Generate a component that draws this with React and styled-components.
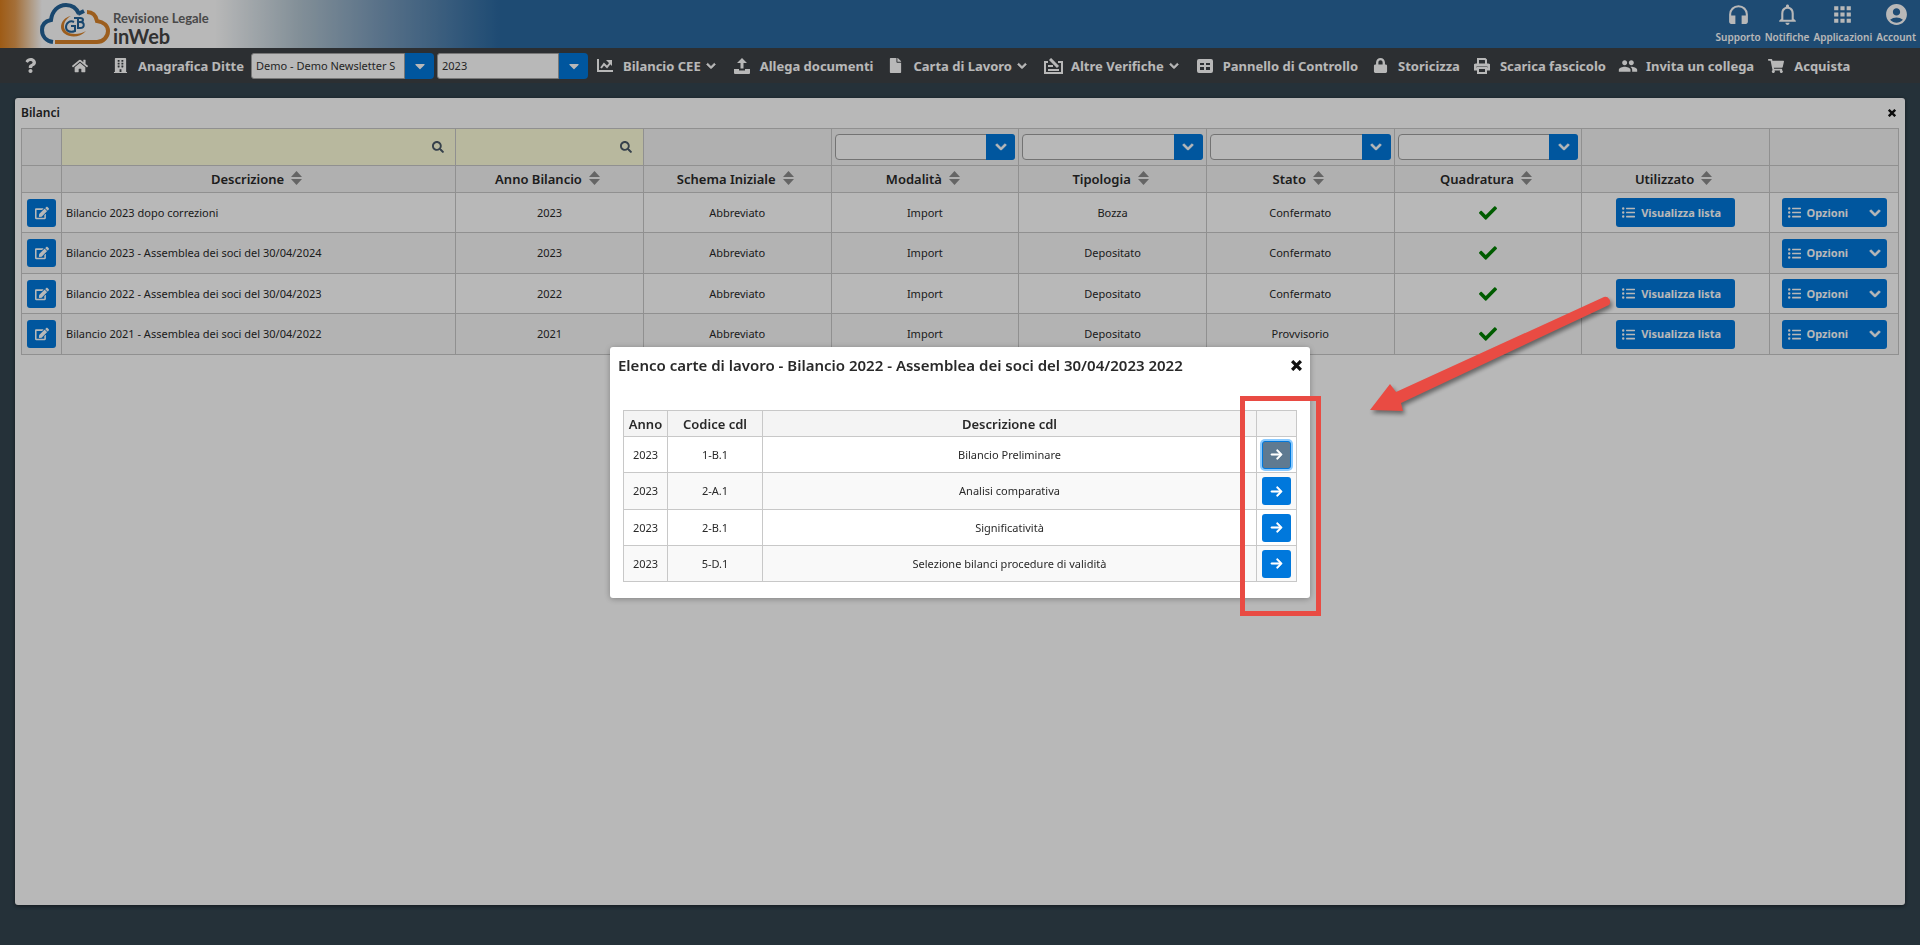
import React, { useState } from 'react'
import styled, { createGlobalStyle, css } from 'styled-components'
import { FaQuestion, FaChevronDown, FaCaretDown, FaShoppingCart, FaFile, FaLock, FaCheck, FaSearch, FaEdit, FaListUl, FaHome, FaBuilding } from 'react-icons/fa'
import { FaArrowRight } from 'react-icons/fa6'
import { MdHeadphones, MdNotificationsNone, MdApps, MdAccountCircle, MdPeople } from 'react-icons/md'


const utilities = [
  { label: 'Supporto', Icon: MdHeadphones },
  { label: 'Notifiche', Icon: MdNotificationsNone },
  { label: 'Applicazioni', Icon: MdApps },
  { label: 'Account', Icon: MdAccountCircle },
];

const columns = ['Descrizione', 'Anno Bilancio', 'Schema Iniziale', 'Modalità', 'Tipologia', 'Stato', 'Quadratura', 'Utilizzato'];
const selectFilters = ['Modalità', 'Tipologia', 'Stato', 'Quadratura'];

const bilanci = [
  { descrizione: 'Bilancio 2023 dopo correzioni', anno: 2023, tipologia: 'Bozza', stato: 'Confermato', utilizzato: true },
  { descrizione: 'Bilancio 2023 - Assemblea dei soci del 30/04/2024', anno: 2023, tipologia: 'Depositato', stato: 'Confermato', utilizzato: false },
  { descrizione: 'Bilancio 2022 - Assemblea dei soci del 30/04/2023', anno: 2022, tipologia: 'Depositato', stato: 'Confermato', utilizzato: true },
  { descrizione: 'Bilancio 2021 - Assemblea dei soci del 30/04/2022', anno: 2021, tipologia: 'Depositato', stato: 'Provvisorio', utilizzato: true },
];

const carte = [
  { anno: 2023, codice: '1-B.1', descrizione: 'Bilancio Preliminare' },
  { anno: 2023, codice: '2-A.1', descrizione: 'Analisi comparativa' },
  { anno: 2023, codice: '2-B.1', descrizione: 'Significatività' },
  { anno: 2023, codice: '5-D.1', descrizione: 'Selezione bilanci procedure di validità' },
];

const ChartIcon = () => (
  <svg width="16" height="14" viewBox="0 0 16 14" fill="none" stroke="currentColor" strokeWidth="2">
    <path d="M1 0v12h15" />
    <path d="M4 9l3-4 3 3 4-5" />
    <path d="M9 1h6v6z" fill="currentColor" stroke="none" />
  </svg>
)

const UploadIcon = () => (
  <svg width="16" height="16" viewBox="0 0 16 16" fill="currentColor">
    <path d="M8 0l5 5H9.500v5.500h-3V5H3z" />
    <path d="M0 11h5v1.500h6V11h5v4a1 1 0 0 1-1 1H1a1 1 0 0 1-1-1z" />
  </svg>
)

const ChecklistIcon = () => (
  <svg width="19" height="16" viewBox="0 0 19 16" fill="none" stroke="currentColor" strokeWidth="2">
    <path d="M4 4H1v11h17V4h-4" />
    <path d="M4 8h5M4 12h11" />
    <path d="M6 1l8 8" strokeWidth="3" />
  </svg>
)

const PanelIcon = () => (
  <svg width="16" height="14" viewBox="0 0 16 14" fill="currentColor" fillRule="evenodd">
    <path d="M2 0h12a2 2 0 0 1 2 2v10a2 2 0 0 1-2 2H2a2 2 0 0 1-2-2V2a2 2 0 0 1 2-2zM3 4v2h4V4zM9 4v2h4V4zM3 8v3h4V8zM9 8v3h4V8z" />
  </svg>
)

const PrinterIcon = () => (
  <svg width="16" height="16" viewBox="0 0 16 16" fill="none" stroke="currentColor" strokeWidth="2">
    <path d="M4 7V1h7l1 1v5" />
    <path d="M3 11H1V8a1 1 0 0 1 1-1h12a1 1 0 0 1 1 1v3h-2" strokeWidth="3" />
    <path d="M4 10h8v5H4z" />
  </svg>
)

const SortIcon = () => (
  <svg width="11" height="14" viewBox="0 0 11 14" fill="currentColor">
    <path d="M5.500 0L11 6H0z" />
    <path d="M5.500 14L0 8h11z" />
  </svg>
)

const CloseIcon = () => (
  <svg viewBox="0 0 10 10" fill="none" stroke="currentColor" strokeWidth="3">
    <path d="M1 1l8 8M9 1L1 9" />
  </svg>
)

const Logo = () => (
  <svg width="70" height="42" viewBox="0 0 70 42" fill="none" strokeWidth="4">
    <path d="M13 39C6 38 2 33 2 27c0-6 4-9 9-10C12 8 18 2 26 2c7 0 11 4 13 9" stroke="#236399" />
    <path d="M38 11l6-3" stroke="#236399" />
    <path d="M47 9c6 0 9 4 10 9 7 1 11 5 11 10 0 6-5 11-11 11H15" stroke="#d9832a" />
    <path d="M31 13c-6 1-10 6-10 11 0 9 16 14 25 4-8 5-22 4-22-5 0-4 3-8 7-10z" fill="#d9832a" />
    <path d="M34 19c-4-2-8 1-8 5s4 6 9 4v-5h-4" stroke="#236399" strokeWidth="2" />
    <path d="M34 15h6c4 0 4 4 0 4h-2M40 19c5 0 5 6 0 6h-2V15" stroke="#236399" strokeWidth="2" />
  </svg>
)

const menu = [
  { label: 'Bilancio CEE', icon: <ChartIcon />, drop: true },
  { label: 'Allega documenti', icon: <UploadIcon /> },
  { label: 'Carta di Lavoro', icon: <FaFile size={15} />, drop: true },
  { label: 'Altre Verifiche', icon: <ChecklistIcon />, drop: true },
  { label: 'Pannello di Controllo', icon: <PanelIcon /> },
  { label: 'Storicizza', icon: <FaLock size={15} /> },
  { label: 'Scarica fascicolo', icon: <PrinterIcon /> },
  { label: 'Invita un collega', icon: <MdPeople size={22} /> },
  { label: 'Acquista', icon: <FaShoppingCart size={16} /> },
];

const App = () => {
  const [ditta, setDitta] = useState('Demo - Demo Newsletter S');
  const [anno, setAnno] = useState('2023');

  return (
    <>
      <GlobalStyle />
      <Page>
        <Header>
          <Brand href="#">
            <Logo />
            <BrandText>
              <BrandTop>Revisione Legale</BrandTop>
              <BrandName>inWeb</BrandName>
            </BrandText>
          </Brand>
          <Utilities>
            {utilities.map(({ label, Icon }) => (
              <UtilityButton key={label}><Icon size={25} />{label}</UtilityButton>
            ))}
          </Utilities>
        </Header>
        <Nav>
          <NavIcon aria-label="Aiuto"><FaQuestion size={15} /></NavIcon>
          <NavIcon aria-label="Home"><FaHome size={16} /></NavIcon>
          <NavItem $first><IconSlot><FaBuilding size={15} /></IconSlot>Anagrafica Ditte</NavItem>
          <Combo>
            <ComboInput aria-label="Ditta" value={ditta} onChange={(e) => setDitta(e.target.value)} $width={154} />
            <ComboButton aria-label="Apri ditte"><FaCaretDown size={16} /></ComboButton>
          </Combo>
          <Combo>
            <ComboInput aria-label="Anno" value={anno} onChange={(e) => setAnno(e.target.value)} $width={122} />
            <ComboButton aria-label="Apri anni"><FaCaretDown size={16} /></ComboButton>
          </Combo>
          {menu.map((item) => (
            <NavItem key={item.label} $drop={item.drop}>
              <IconSlot>{item.icon}</IconSlot>
              {item.label}
              {item.drop && <Chevron size={10} />}
            </NavItem>
          ))}
        </Nav>
        <Panel>
          <PanelHead>
            <PanelTitle>Bilanci</PanelTitle>
            <CloseButton aria-label="Chiudi bilanci" $size={8}><CloseIcon /></CloseButton>
          </PanelHead>
          <Grid>
            <colgroup>
              <col className="edit" />
              <col className="description" />
              {columns.slice(1).map((c) => <col key={c} />)}
              <col className="options" />
            </colgroup>
            <thead>
              <FilterRow>
                <th></th>
                {columns.map((c, i) => (
                  <FilterCell key={c} $search={i < 2}>
                    {i < 2 && (
                      <SearchBox>
                        <input aria-label={`Cerca ${c}`} />
                        <button aria-label={`Filtra ${c}`}><FaSearch size={12} /></button>
                      </SearchBox>
                    )}
                    {selectFilters.includes(c) && (
                      <SelectBox>
                        <select aria-label={c} defaultValue=""><option value=""></option></select>
                        <SelectArrow><Chevron size={12} /></SelectArrow>
                      </SelectBox>
                    )}
                  </FilterCell>
                ))}
                <th></th>
              </FilterRow>
              <HeadRow>
                <th></th>
                {columns.map((c) => (
                  <th key={c}><SortButton>{c}<SortIcon /></SortButton></th>
                ))}
                <th></th>
              </HeadRow>
            </thead>
            <tbody>
              {bilanci.map((b) => (
                <Row key={b.descrizione}>
                  <td><IconButton aria-label="Modifica"><FaEdit size={14} /></IconButton></td>
                  <LeftCell>{b.descrizione}</LeftCell>
                  <td>{b.anno}</td>
                  <td>Abbreviato</td>
                  <td>Import</td>
                  <td>{b.tipologia}</td>
                  <td>{b.stato}</td>
                  <td><Check size={18} /></td>
                  <td>{b.utilizzato && <ActionButton $width={119}><FaListUl size={13} />Visualizza lista</ActionButton>}</td>
                  <td><ActionButton $width={105}><FaListUl size={13} />Opzioni<Chevron size={12} /></ActionButton></td>
                </Row>
              ))}
            </tbody>
          </Grid>
        </Panel>
      </Page>
      <Overlay>
        <Modal role="dialog" aria-labelledby="modal-title">
          <ModalHead>
            <ModalTitle id="modal-title">Elenco carte di lavoro - Bilancio 2022 - Assemblea dei soci del 30/04/2023 2022</ModalTitle>
            <CloseButton aria-label="Chiudi" $size={11}><CloseIcon /></CloseButton>
          </ModalHead>
          <ModalGrid>
            <colgroup>
              <col className="year" />
              <col className="code" />
              <col />
              <col className="go" />
            </colgroup>
            <thead>
              <HeadRow>
                <th>Anno</th>
                <th>Codice cdl</th>
                <th>Descrizione cdl</th>
                <th></th>
              </HeadRow>
            </thead>
            <tbody>
              {carte.map((c, i) => (
                <ModalRow key={c.codice}>
                  <td>{c.anno}</td>
                  <td>{c.codice}</td>
                  <td>{c.descrizione}</td>
                  <td><IconButton aria-label={`Apri ${c.codice}`} $focused={i === 0}><GoArrow size={13} /></IconButton></td>
                </ModalRow>
              ))}
            </tbody>
          </ModalGrid>
          <Highlight />
          <Pointer width="250" height="124" viewBox="0 0 250 124">
            <path d="M10 114L30 88L36 96L244 1A5 5 0 0 1 249 9L41 107L43 115Z" />
          </Pointer>
        </Modal>
      </Overlay>
    </>
  )
};

export default App

const GlobalStyle = createGlobalStyle`
  * {
    box-sizing: border-box;
  }
  body {
    margin: 0;
    background-color: #344550;
    color: #292929;
    font-family: 'Noto Sans', 'Open Sans', sans-serif;
    font-size: 12px;
  }
  button, input, select {
    font: inherit;
    color: inherit;
    margin: 0;
  }
  button {
    border: none;
    background: none;
    padding: 0;
    cursor: pointer;
  }
`;

const Chevron = styled(FaChevronDown)`
  stroke: currentColor;
  stroke-width: 40px;
`;

const GoArrow = styled(FaArrowRight)`
  stroke: currentColor;
  stroke-width: 20px;
`;

const Page = styled.div`
  min-height: 100vh;
  display: flex;
  flex-direction: column;
`;

const Header = styled.header`
  height: 48px;
  display: flex;
  justify-content: space-between;
  background: linear-gradient(90deg, #dc7f1e 0, #e39a4e 15px, #fff 42px, #fff 215px, #b4c6d2 300px, #7b9dbd 380px, #2a68a0 500px);
`;

const Brand = styled.a`
  display: flex;
  align-items: center;
  gap: 3px;
  padding-left: 40px;
  text-decoration: none;
`;

const BrandText = styled.span`
  display: flex;
  flex-direction: column;
  padding-top: 6px;
  font-family: Lato, sans-serif;
`;

const BrandTop = styled.span`
  font-size: 13px;
  line-height: 18px;
  font-weight: 700;
  color: #666;
`;

const BrandName = styled.span`
  font-size: 20px;
  line-height: 18px;
  font-weight: 700;
  color: #444;
`;

const Utilities = styled.div`
  display: flex;
  gap: 4px;
  padding-right: 4px;
`;

const UtilityButton = styled.button`
  display: flex;
  flex-direction: column;
  align-items: center;
  gap: 3px;
  padding-top: 2px;
  color: white;
  font-size: 10px;
  line-height: 14px;
  font-weight: 600;
`;

const Nav = styled.nav`
  height: 35px;
  display: flex;
  align-items: center;
  padding-left: 5px;
  background-color: #3e4246;
  color: white;
  white-space: nowrap;
`;

const NavIcon = styled.button`
  width: 50px;
  display: flex;
  justify-content: center;
`;

const NavItem = styled.button`
  display: flex;
  align-items: center;
  font-size: 13px;
  font-weight: 700;
  margin-left: ${({ $first }) => ($first ? '5px' : '0')};
  margin-right: ${({ $first, $drop }) => ($first ? '7px' : $drop ? '16px' : '12px')};
  > svg {
    margin-left: 5px;
  }
`;

const IconSlot = styled.span`
  width: 20px;
  margin-right: 8px;
  display: flex;
  justify-content: center;
`;

const Combo = styled.div`
  display: flex;
  height: 26px;
  margin-right: 3px;
  & + button {
    margin-left: 4px;
  }
`;

const ComboInput = styled.input`
  width: ${({ $width }) => $width}px;
  padding: 0 4px;
  border: 1px solid #a5a5a5;
  border-radius: 3px 0 0 3px;
  background-color: white;
  font-size: 11px;
  color: #333;
`;

const ComboButton = styled.button`
  width: 29px;
  display: flex;
  align-items: center;
  justify-content: center;
  border-radius: 0 4px 4px 0;
  background-color: #0078dc;
`;

const Panel = styled.main`
  flex: 1;
  margin: 15px 15px 40px;
  padding: 0 6px;
  border-radius: 3px;
  background-color: white;
  box-shadow: 0 1px 4px rgba(0, 0, 0, 0.5);
`;

const PanelHead = styled.div`
  height: 30px;
  display: flex;
  align-items: center;
  justify-content: space-between;
  padding-right: 3px;
`;

const PanelTitle = styled.h1`
  margin: 0;
  font-size: 12px;
  line-height: 16px;
  font-weight: 600;
`;

const CloseButton = styled.button`
  display: flex;
  color: #111;
  svg {
    width: ${({ $size }) => $size}px;
    height: ${({ $size }) => $size}px;
  }
`;

const tableBase = css`
  width: 100%;
  table-layout: fixed;
  border-collapse: collapse;
  text-align: center;
  th, td {
    padding: 0;
    border: 1px solid #c8c8c8;
    line-height: 16px;
  }
  th {
    background-color: #f4f4f4;
  }
  tbody tr:nth-child(even) {
    background-color: #f9f9f9;
  }
`;

const Grid = styled.table`
  ${tableBase}
  .edit { width: 40px; }
  .description { width: 21%; }
  .options { width: 129px; }
`;

const FilterRow = styled.tr`
  height: 37px;
`;

const FilterCell = styled.th`
  && {
    padding: ${({ $search }) => ($search ? '0' : '0 3px')};
    background-color: ${({ $search }) => ($search ? '#ffffdc' : '#f4f4f4')};
  }
`;

const SearchBox = styled.div`
  display: flex;
  height: 36px;
  input {
    flex: 1;
    min-width: 0;
    border: none;
    background: transparent;
  }
  button {
    width: 34px;
    display: flex;
    align-items: center;
    justify-content: center;
    color: #4b5a68;
  }
`;

const SelectBox = styled.div`
  display: flex;
  height: 26px;
  position: relative;
  select {
    flex: 1;
    min-width: 0;
    appearance: none;
    border: 1px solid #a0a0a0;
    border-radius: 4px;
    background-color: white;
  }
`;

const SelectArrow = styled.span`
  position: absolute;
  top: 0;
  right: 0;
  bottom: 0;
  width: 29px;
  display: flex;
  align-items: center;
  justify-content: center;
  border-radius: 0 3px 3px 0;
  background-color: #0078dc;
  color: white;
  pointer-events: none;
`;

const HeadRow = styled.tr`
  height: 27px;
  font-size: 13px;
  th {
    font-weight: 600;
  }
`;

const SortButton = styled.button`
  display: inline-flex;
  align-items: flex-start;
  gap: 7px;
  margin-right: 4px;
  svg {
    color: #8c8c8c;
  }
`;

const Row = styled.tr`
  height: 40px;
  &:nth-child(even) {
    height: 41px;
  }
  td {
    font-size: 11px;
  }
`;

const LeftCell = styled.td`
  && {
    text-align: left;
    padding-left: 4px;
  }
`;

const Check = styled(FaCheck)`
  display: block;
  margin: 0 auto;
  color: #008000;
`;

const IconButton = styled.button`
  width: 29px;
  height: 28px;
  display: flex;
  align-items: center;
  justify-content: center;
  margin: 0 auto;
  border-radius: 3px;
  background-color: #0078dc;
  color: white;
  ${({ $focused }) => $focused && css`
    background-color: #5f7a91;
    border: 1px solid #0078dc;
    box-shadow: 0 0 0 2px #8ccbff;
  `}
`;

const ActionButton = styled.button`
  width: ${({ $width }) => $width}px;
  height: 29px;
  display: flex;
  align-items: center;
  gap: 6px;
  margin: 0 auto;
  padding: 0 6px;
  border-radius: 3px;
  background-color: #0078dc;
  color: white;
  font-size: 11px;
  font-weight: 700;
  white-space: nowrap;
  svg:nth-of-type(2) {
    margin-left: auto;
  }
`;

const Overlay = styled.div`
  position: fixed;
  inset: 0;
  display: flex;
  align-items: center;
  justify-content: center;
  background-color: rgba(0, 0, 0, 0.28);
`;

const Modal = styled.section`
  position: relative;
  width: 700px;
  padding: 0 13px 16px;
  border-radius: 3px;
  background-color: white;
  box-shadow: 0 1px 6px rgba(0, 0, 0, 0.3);
`;

const ModalHead = styled.div`
  height: 63px;
  display: flex;
  align-items: flex-start;
  justify-content: space-between;
  margin: 0 -5px;
  padding-top: 8px;
  ${CloseButton} {
    padding-top: 5px;
  }
`;

const ModalTitle = styled.h2`
  margin: 0;
  font-size: 15px;
  line-height: 20px;
  font-weight: 600;
`;

const ModalGrid = styled.table`
  ${tableBase}
  .year { width: 44px; }
  .code { width: 95px; }
  .go { width: 40px; }
  ${HeadRow} {
    height: 26px;
  }
`;

const ModalRow = styled.tr`
  height: 36px;
  font-size: 11px;
  &:nth-child(2) {
    height: 37px;
  }
`;

const Highlight = styled.div`
  position: absolute;
  top: 49px;
  left: 630px;
  width: 81px;
  height: 220px;
  border: 5px solid #e94b43;
  pointer-events: none;
`;

const Pointer = styled.svg`
  position: absolute;
  top: -51px;
  left: 750px;
  overflow: visible;
  fill: #e94b43;
  filter: drop-shadow(2px 3px 2px rgba(0, 0, 0, 0.45));
  pointer-events: none;
`;
